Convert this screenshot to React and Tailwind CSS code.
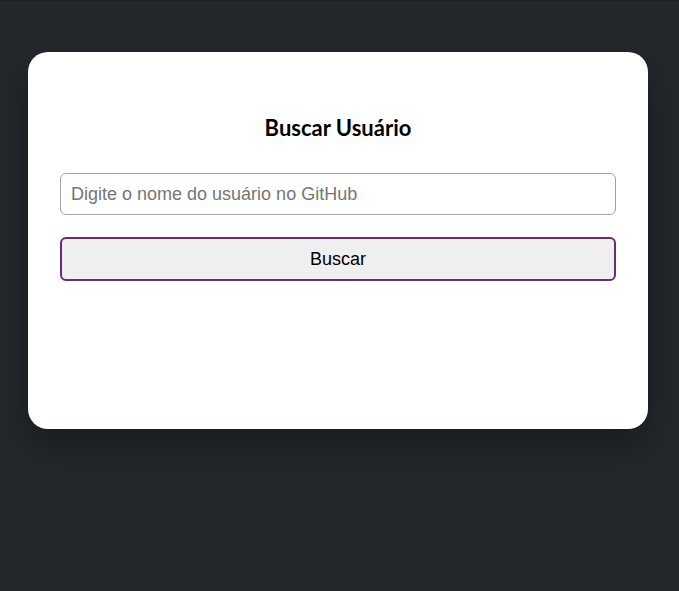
import React, { useState } from 'react';

const App = () => {
  const [username, setUsername] = useState('');

  return (
    <div className="min-h-[591px] bg-[#24282c] border-t border-[#1e2125] pt-[51px] pl-[28px] pr-[31px]">
      <div className="bg-white rounded-[20px] h-[377px] px-[32px] pt-[62px] shadow-[0_16px_40px_rgba(0,0,0,0.35)]">
        <h1 className="text-center text-[22px] leading-[28px] font-bold text-black font-['Lato',sans-serif]">
          Buscar Usuário
        </h1>

        <div className="mt-[31px] flex flex-col gap-[22px] font-['Liberation_Sans',Arial,sans-serif]">
          <input
            type="text"
            value={username}
            onChange={(e) => setUsername(e.target.value)}
            placeholder="Digite o nome do usuário no GitHub"
            className="h-[42px] w-full border border-[#a3a3a3] rounded-[6px] px-[10px] text-[18px] text-black placeholder:text-[#757575] outline-none"
          />
          <button className="h-[44px] w-full bg-[#efefef] border-2 border-[#6b2a7b] rounded-[6px] text-[18px] text-black">
            Buscar
          </button>
        </div>
      </div>
    </div>
  );
};

export default App;
